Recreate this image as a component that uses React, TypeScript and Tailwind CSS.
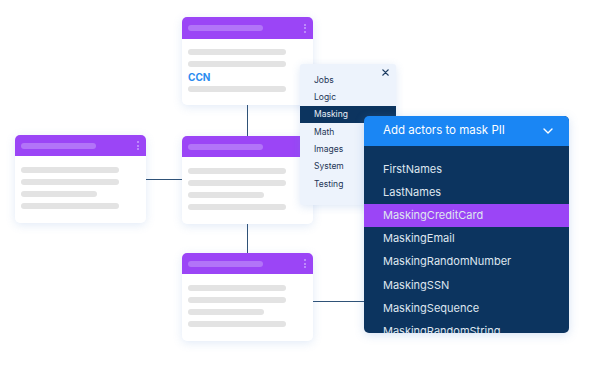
import React from "react";

type Line = "long" | "short" | "ccn";

const Dots: React.FC = () => (
    <div className="flex flex-col gap-[1.5px]">
        <span className="w-[2px] h-[2px] rounded-full bg-[#c9a0fb]" />
        <span className="w-[2px] h-[2px] rounded-full bg-[#c9a0fb]" />
        <span className="w-[2px] h-[2px] rounded-full bg-[#c9a0fb]" />
    </div>
);

const Card: React.FC<{ x: number; y: number; lines: Line[]; dots?: boolean; headerH?: number; padTop?: number }> = ({
    x,
    y,
    lines,
    dots,
    headerH = 21,
    padTop = 11
}) => (
    <div
        className="absolute w-[131px] h-[88px] rounded-[5px] bg-white overflow-hidden shadow-[0_2px_10px_rgba(90,140,210,0.18)]"
        style={{ left: x, top: y }}
    >
        <div
            className="flex items-center justify-between bg-[#9b45f6] pl-[6px] pr-[7px]"
            style={{ height: headerH }}
        >
            <div className="w-[75px] h-[6px] rounded-full bg-[#b274f8]" />
            {dots && <Dots />}
        </div>
        <div className="flex flex-col gap-[6px] pl-[6px]" style={{ paddingTop: padTop }}>
            {lines.map((l, i) =>
                l === "ccn" ? (
                    <div key={i} className="h-[7px] flex items-center text-[10px] font-bold text-[#2b8cf0] leading-none">
                        CCN
                    </div>
                ) : (
                    <div
                        key={i}
                        className={`h-[6px] rounded-full bg-[#e3e3e3] ${l === "long" ? "w-[98px]" : "w-[76px]"}`}
                    />
                )
            )}
        </div>
    </div>
);

const categories = ["Jobs", "Logic", "Masking", "Math", "Images", "System", "Testing"];
const actors = [
    "FirstNames",
    "LastNames",
    "MaskingCreditCard",
    "MaskingEmail",
    "MaskingRandomNumber",
    "MaskingSSN",
    "MaskingSequence",
    "MaskingRandomString"
];

const App: React.FC = () => {
    return (
        <div className="relative w-[600px] h-[366px] bg-white overflow-hidden font-['Inter',sans-serif]">
            {/* connectors */}
            <div className="absolute left-[246.5px] top-[100px] w-[1.5px] h-[40px] bg-[#2f5277]" />
            <div className="absolute left-[246.5px] top-[220px] w-[1.5px] h-[36px] bg-[#2f5277]" />
            <div className="absolute left-[144px] top-[178.5px] w-[40px] h-[1.5px] bg-[#2f5277]" />
            <div className="absolute left-[310px] top-[300.5px] w-[56px] h-[1.5px] bg-[#2f5277]" />

            {/* nodes */}
            <Card x={182} y={17} dots headerH={22} padTop={10} lines={["long", "long", "ccn", "long"]} />
            <Card x={15} y={135} dots lines={["long", "long", "short", "long"]} />
            <Card x={182} y={136} lines={["long", "long", "short", "long"]} />
            <Card x={182} y={253} dots lines={["long", "long", "short", "long"]} />

            {/* category menu */}
            <div className="absolute left-[300px] top-[64px] w-[96px] h-[141px] rounded-[3px] bg-[#edf3fc] shadow-[0_2px_8px_rgba(90,140,210,0.2)] pt-[7.5px]">
                <svg
                    className="absolute right-[7px] top-[5px]"
                    width="7"
                    height="7"
                    viewBox="0 0 8 8"
                    fill="none"
                    stroke="#1d3c62"
                    strokeWidth="1.6"
                    strokeLinecap="round"
                >
                    <path d="M1 1 L7 7 M7 1 L1 7" />
                </svg>
                {categories.map((c) => (
                    <div
                        key={c}
                        className={`h-[17.3px] flex items-center pl-[14px] text-[8.5px] leading-none ${
                            c === "Masking" ? "bg-[#0c345f] text-[#e8eef6]" : "text-[#1d3556]"
                        }`}
                    >
                        {c}
                    </div>
                ))}
            </div>

            {/* actor dropdown */}
            <div className="absolute left-[364px] top-[116px] w-[205px] h-[217px] rounded-[5px] overflow-hidden bg-[#0c345f] shadow-[0_2px_10px_rgba(90,140,210,0.25)]">
                <div className="h-[30px] bg-[#1a86f4] flex items-center justify-between pl-[19px] pr-[16px]">
                    <span className="text-[11.5px] text-white leading-none">Add actors to mask PII</span>
                    <svg width="10" height="6" viewBox="0 0 10 6" fill="none" stroke="white" strokeWidth="1.4" strokeLinecap="round" strokeLinejoin="round">
                        <path d="M1 1 L5 5 L9 1" />
                    </svg>
                </div>
                <div className="pt-[11.5px]">
                    {actors.map((a) => (
                        <div
                            key={a}
                            className={`h-[23.2px] flex items-center pl-[19px] text-[11px] leading-none text-[#dfe6ef] ${
                                a === "MaskingCreditCard" ? "bg-[#9b45f6]" : ""
                            }`}
                        >
                            {a}
                        </div>
                    ))}
                </div>
            </div>
        </div>
    );
};

export default App;
